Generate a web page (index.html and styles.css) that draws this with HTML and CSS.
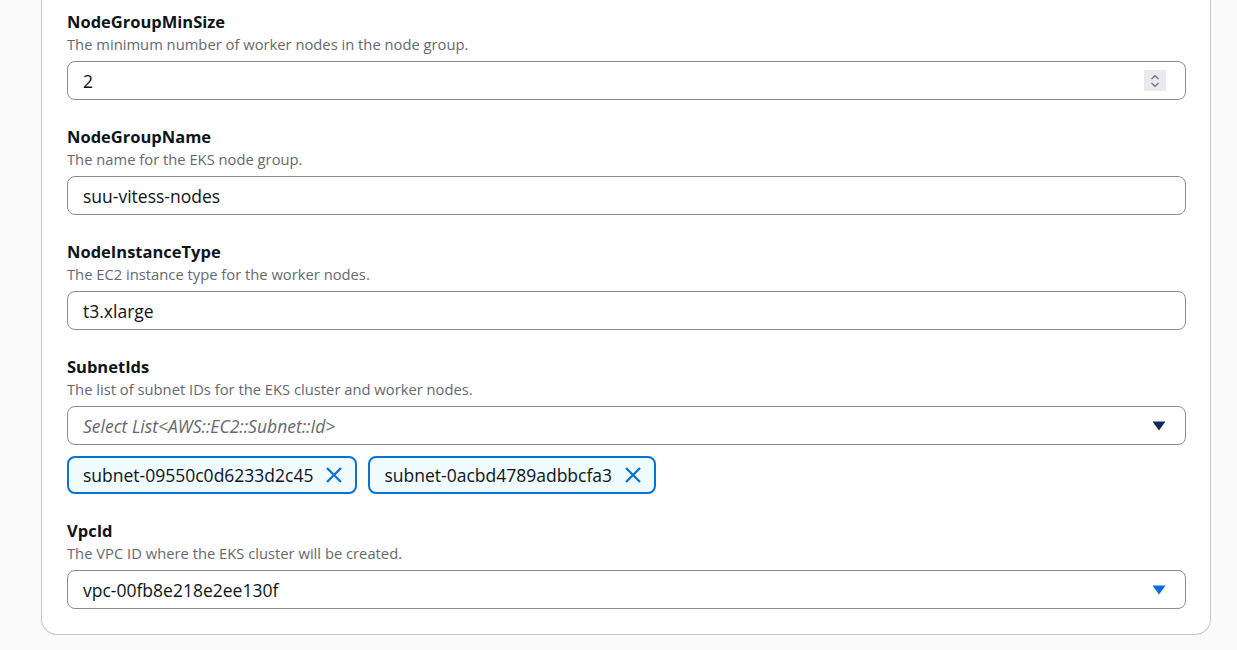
FILE: index.html
```html
<!DOCTYPE html>
<html lang="en">
<head>
<meta charset="utf-8">
<title>Parameters</title>
<link rel="stylesheet" href="styles.css">
</head>
<body>
<div class="page">
  <div class="card">
    <div class="field">
      <div class="label">NodeGroupMinSize</div>
      <div class="desc">The minimum number of worker nodes in the node group.</div>
      <div class="input">
        <span class="value">2</span>
        <span class="spinner">
          <svg width="10" height="16" viewBox="0 0 10 16"><path d="M1.5 6 L5 2.5 L8.5 6 M1.5 10 L5 13.5 L8.5 10" fill="none" stroke="#6b6b73" stroke-width="1.2"/></svg>
        </span>
      </div>
    </div>
    <div class="field">
      <div class="label">NodeGroupName</div>
      <div class="desc">The name for the EKS node group.</div>
      <div class="input"><span class="value">suu-vitess-nodes</span></div>
    </div>
    <div class="field">
      <div class="label">NodeInstanceType</div>
      <div class="desc">The EC2 instance type for the worker nodes.</div>
      <div class="input"><span class="value">t3.xlarge</span></div>
    </div>
    <div class="field">
      <div class="label">SubnetIds</div>
      <div class="desc">The list of subnet IDs for the EKS cluster and worker nodes.</div>
      <div class="input select">
        <span class="placeholder">Select List&lt;AWS::EC2::Subnet::Id&gt;</span>
        <svg class="caret" width="14" height="10" viewBox="0 0 14 10"><path d="M0.5 0.5 H13.5 L7 9.5 Z" fill="#0f2b5b"/></svg>
      </div>
      <div class="tokens">
        <div class="token">
          <span>subnet-09550c0d6233d2c45</span>
          <svg class="x" width="18" height="18" viewBox="0 0 18 18"><path d="M2 2 L16 16 M16 2 L2 16" stroke="#0972d3" stroke-width="2.3" fill="none"/></svg>
        </div>
        <div class="token">
          <span>subnet-0acbd4789adbbcfa3</span>
          <svg class="x" width="18" height="18" viewBox="0 0 18 18"><path d="M2 2 L16 16 M16 2 L2 16" stroke="#0972d3" stroke-width="2.3" fill="none"/></svg>
        </div>
      </div>
    </div>
    <div class="field">
      <div class="label">VpcId</div>
      <div class="desc">The VPC ID where the EKS cluster will be created.</div>
      <div class="input select">
        <span class="value">vpc-00fb8e218e2ee130f</span>
        <svg class="caret" width="14" height="10" viewBox="0 0 14 10"><path d="M0.5 0.5 H13.5 L7 9.5 Z" fill="#006ce0"/></svg>
      </div>
    </div>
  </div>
</div>
</body>
</html>
```
FILE: styles.css
```css
html, body {
  margin: 0;
  padding: 0;
  background: #fafafa;
  font-family: "Open Sans", "Noto Sans", sans-serif;
  color: #0f141a;
}
.page {
  padding: 0 26px 14px 41px;
}
.card {
  background: #ffffff;
  border: 1px solid #c6c6cd;
  border-top: none;
  border-radius: 0 0 16px 16px;
  padding: 11px 24px 25px 25px;
  display: flex;
  flex-direction: column;
  gap: 26px;
}
.field {
  display: flex;
  flex-direction: column;
}
.label {
  font-size: 16.5px;
  font-weight: 700;
  line-height: 22px;
}
.desc {
  font-size: 14.75px;
  line-height: 20px;
  color: #656871;
  margin-top: 1px;
}
.input {
  margin-top: 7px;
  box-sizing: border-box;
  height: 39px;
  border: 1px solid #8c8c94;
  border-radius: 8px;
  background: #ffffff;
  display: flex;
  align-items: center;
  padding: 0 19px 0 15px;
  font-size: 17.5px;
}
.input:first-of-type .spinner {
  margin-right: -3px;
}
.value {
  flex: 1;
  color: #0f141a;
}
.placeholder {
  flex: 1;
  color: #656871;
  font-style: italic;
}
.spinner {
  width: 22px;
  height: 21px;
  background: #e9e9ef;
  display: flex;
  align-items: center;
  justify-content: center;
}
.caret {
  display: block;
}
.tokens {
  display: flex;
  gap: 11px;
  margin-top: 11px;
}
.token {
  box-sizing: border-box;
  height: 38px;
  border: 2px solid #0972d3;
  border-radius: 8px;
  background: #f0fbff;
  display: flex;
  align-items: center;
  gap: 12px;
  padding: 0 12px 0 14px;
  font-size: 17.5px;
  color: #0f141a;
}
.token .x {
  display: block;
}
```
